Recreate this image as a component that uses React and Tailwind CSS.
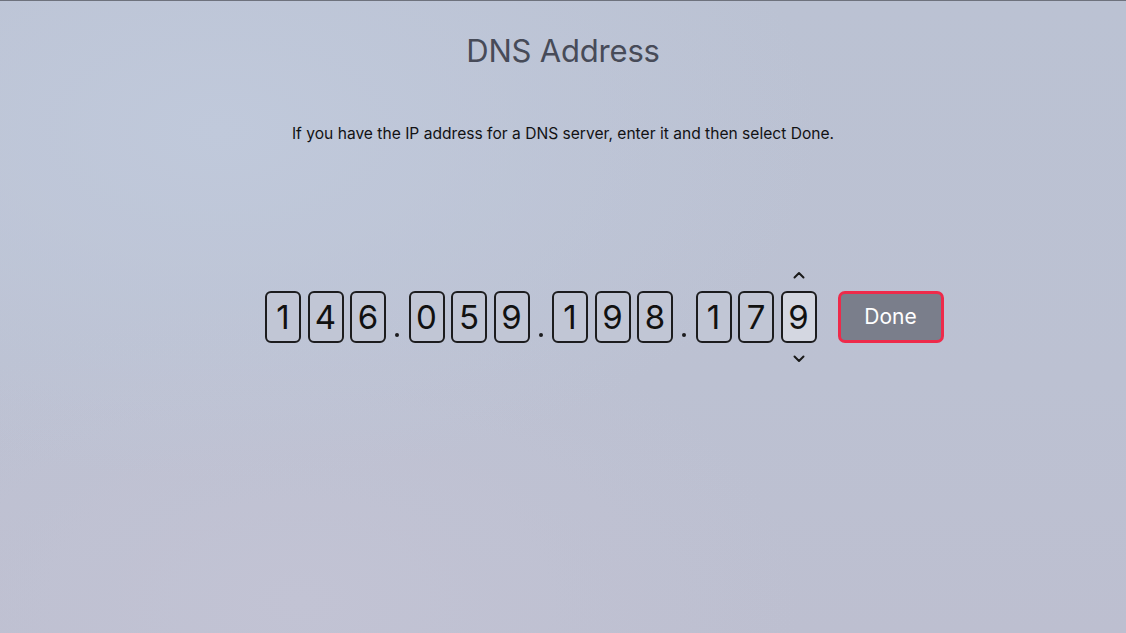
import React from "react";

const groups = [["1", "4", "6"], ["0", "5", "9"], ["1", "9", "8"], ["1", "7", "9"]];

function Chevron({ up }) {
  return (
    <svg width="12" height="8" viewBox="0 0 12 8" className="block">
      <path
        d={up ? "M1.5 6.5 L6 2 L10.5 6.5" : "M1.5 1.5 L6 6 L10.5 1.5"}
        fill="none"
        stroke="#1a1a1a"
        strokeWidth="2"
        strokeLinecap="round"
        strokeLinejoin="round"
      />
    </svg>
  );
}

function Digit({ d, selected }) {
  return (
    <div className="relative">
      <div
        className={`w-[36px] h-[52px] rounded-[6px] border-2 border-[#1c1c1e] flex items-center justify-center text-[33px] leading-none text-[#111] ${
          selected ? "bg-[#d4d7e1]" : "bg-[#c1c6d5]"
        }`}
      >
        {d}
      </div>
      {selected && (
        <>
          <div className="absolute left-1/2 -translate-x-1/2 top-[-20px]">
            <Chevron up />
          </div>
          <div className="absolute left-1/2 -translate-x-1/2 bottom-[-20px]">
            <Chevron />
          </div>
        </>
      )}
    </div>
  );
}

export default function App() {
  return (
    <div
      className="w-[1126px] h-[633px] overflow-hidden relative border-t border-[#6e727d] flex flex-col items-center"
      style={{
        fontFamily: "Inter, 'Open Sans', 'Liberation Sans', sans-serif",
        background:
          "radial-gradient(ellipse 600px 350px at 220px 130px, #c0c9db 0%, rgba(192,201,219,0) 100%), radial-gradient(ellipse 500px 300px at 300px 600px, #c2c3d4 0%, rgba(194,195,212,0) 100%), linear-gradient(180deg, #bbc2d3 0%, #bcc1d2 60%, #bdbfd0 100%)",
      }}
    >
      <h1 className="mt-[31px] text-[31px] leading-[38px] text-[#474b58] font-normal tracking-[-0.2px]">
        DNS Address
      </h1>
      <p className="mt-[53px] text-[15.6px] leading-[22px] text-[#121214]">
        If you have the IP address for a DNS server, enter it and then select Done.
      </p>
      <div className="self-stretch pl-[265px] mt-[146px] flex items-center">
        {groups.map((g, gi) => (
          <React.Fragment key={gi}>
            {gi > 0 && (
              <div className="w-[22.5px] h-[52px] flex items-end justify-center pb-[6px]">
                <div className="w-[4px] h-[4px] rounded-full bg-[#1c1c1e]" />
              </div>
            )}
            <div className="flex gap-[6.5px]">
              {g.map((d, di) => (
                <Digit key={di} d={d} selected={gi === 3 && di === 2} />
              ))}
            </div>
          </React.Fragment>
        ))}
        <button className="ml-[21px] w-[106px] h-[52px] rounded-[7px] border-[3px] border-[#ee2a4a] bg-[#7a7e8b] text-white text-[21px] flex items-center justify-center">
          Done
        </button>
      </div>
    </div>
  );
}
